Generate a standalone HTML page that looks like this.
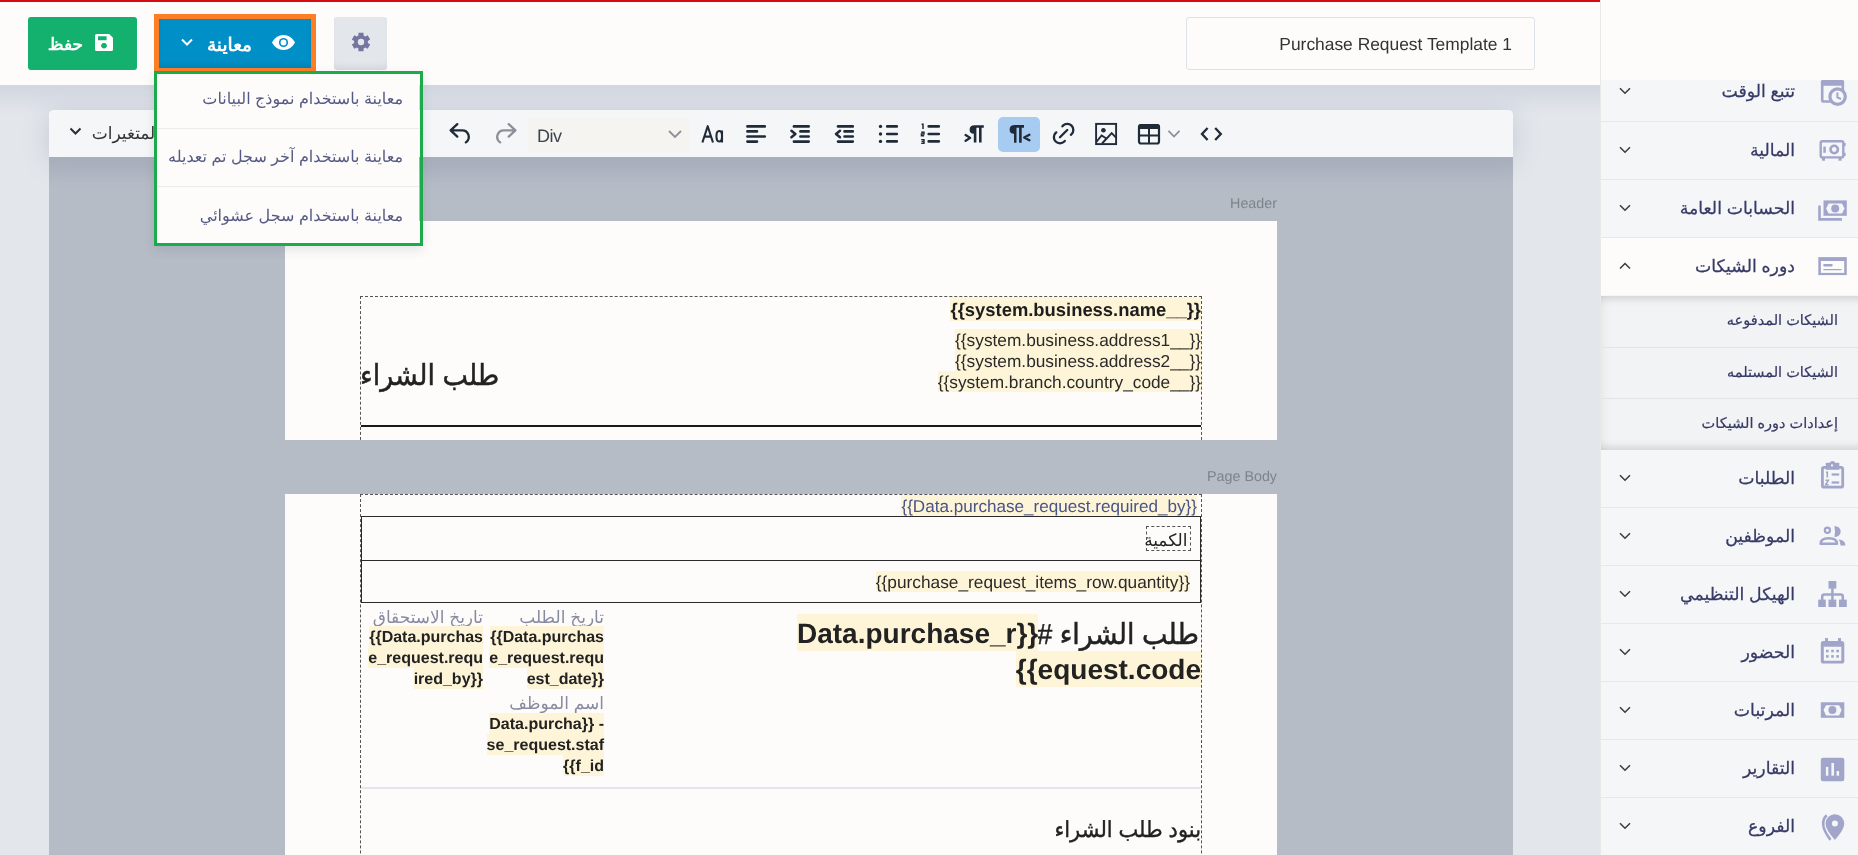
<!DOCTYPE html>
<html lang="ar">
<head>
<meta charset="utf-8">
<style>
*{box-sizing:border-box;margin:0;padding:0}
html,body{width:1858px;height:855px;overflow:hidden}
body{position:relative;background:#e3e7ec;font-family:"Liberation Sans",sans-serif;color:#222;text-rendering:geometricPrecision}
.a{position:absolute}
.nw{white-space:nowrap}
/* top bar */
#top{left:0;top:0;width:1600px;height:85px;background:#fdfcfa}
#redline{left:0;top:0;width:1600px;height:2px;background:#d40b10}
#topshadow{left:0;top:85px;width:1600px;height:30px;background:linear-gradient(#d1d6df,rgba(226,230,236,0))}
/* sidebar */
#side{left:1600px;top:0;width:258px;height:855px;background:#f5f6f8;border-left:1px solid #ebe9e6}
#sidetop{left:0;top:0;width:257px;height:80px;background:#fdfcfa}
.si{left:0;width:257px;height:58px;border-top:1px solid #e9e8e4}
.si .t{right:63px;top:0;line-height:57px;font-size:17.3px;color:#363a66;direction:rtl;-webkit-text-stroke:0.25px #363a66}
.si .ch{left:18px;top:24px;width:12px;height:8px}
.si .ic{left:217px;width:30px;height:30px}
.sub{left:0;width:257px;height:51px;border-top:1px solid #e2e3e5}
.sub .t{right:20px;top:0;line-height:50px;font-size:14.5px;color:#363a66;direction:rtl;-webkit-text-stroke:0.2px #363a66}
/* editor */
#editor{left:49px;top:110px;width:1464px;height:745px;background:#b6bcc6;border-radius:4px 4px 0 0}
#toolbar{left:0;top:0;width:1464px;height:47px;background:#f4f6f8;border-radius:4px 4px 0 0;box-shadow:0 4px 26px rgba(110,120,145,.28)}
#canvasshadow{left:0;top:47px;width:1464px;height:26px;background:linear-gradient(#a8afbc,rgba(182,188,198,0))}
.page{background:#fdfcfa}
.hl{background:#fef5d8}
.dash{border:1px dashed #555}
.lbl{font-size:14.3px;color:#7f8389}
</style>
</head>
<body><div style="position:absolute;left:0;top:0;width:1858px;height:855px;will-change:transform">
<div id="top" class="a"></div>
<div id="redline" class="a"></div>
<div id="topshadow" class="a"></div>

<!-- save button -->
<div class="a" style="left:28px;top:17px;width:109px;height:53px;background:#13b06e;border-radius:3px"></div>
<svg class="a" style="left:95px;top:34px" width="18" height="17" viewBox="0 0 18 17"><path fill="#fff" d="M1.6 0H14.2L18 3.8V15.4Q18 17 16.4 17H1.6Q0 17 0 15.4V1.6Q0 0 1.6 0ZM3 2.2V6.2H11.6V2.2ZM9 9.2A2.6 2.6 0 1 0 9.001 9.2Z"/><circle cx="9" cy="11.6" r="2.7" fill="#13b06e"/></svg>
<div class="a nw" style="left:47px;top:30px;width:36px;line-height:30px;font-size:17px;font-weight:700;color:#fff;direction:rtl;text-align:right">حفظ</div>

<!-- preview button -->
<div class="a" style="left:154px;top:14px;width:162px;height:59px;background:#fd7e24"></div>
<div class="a" style="left:159px;top:19px;width:152px;height:49px;background:#008fc6;box-shadow:inset 0 -5px 5px -2px rgba(0,40,80,.12)"></div>
<svg class="a" style="left:272px;top:35px" width="23" height="15" viewBox="0 0 23 15"><path fill="#fff" d="M11.5 0C6.5 0 2.3 3 0 7.5 2.3 12 6.5 15 11.5 15S20.7 12 23 7.5C20.7 3 16.5 0 11.5 0Z"/><circle cx="11.5" cy="7.5" r="4.6" fill="#008fc6"/><circle cx="11.5" cy="7.5" r="2.9" fill="#fff"/></svg>
<div class="a nw" style="left:200px;top:30px;width:52px;line-height:30px;font-size:18.5px;font-weight:700;color:#fff;direction:rtl;text-align:right">معاينة</div>
<svg class="a" style="left:181px;top:38px" width="12" height="9" viewBox="0 0 12 9"><path d="M1 1.5L6 6.5L11 1.5" fill="none" stroke="#fff" stroke-width="2"/></svg>

<!-- settings button -->
<div class="a" style="left:334px;top:17px;width:53px;height:53px;background:#e3e7ec;border-radius:3px;box-shadow:inset 0 -6px 6px -3px rgba(0,20,60,.07)"></div>
<svg class="a" style="left:351px;top:32.4px" width="20" height="20" viewBox="0 0 20 20"><path fill="#7476a0" d="M7.42 3.60 L7.46 0.85 L12.54 0.85 L12.58 3.60 A6.9 6.9 0 0 1 14.25 4.56 L16.66 3.22 L19.20 7.62 L16.83 9.04 A6.9 6.9 0 0 1 16.83 10.96 L19.20 12.38 L16.66 16.78 L14.25 15.44 A6.9 6.9 0 0 1 12.58 16.40 L12.54 19.15 L7.46 19.15 L7.42 16.40 A6.9 6.9 0 0 1 5.75 15.44 L3.34 16.78 L0.80 12.38 L3.17 10.96 A6.9 6.9 0 0 1 3.17 9.04 L0.80 7.62 L3.34 3.22 L5.75 4.56 A6.9 6.9 0 0 1 7.42 3.60 Z"/><circle cx="10" cy="10" r="3.2" fill="#e3e7ec"/></svg>

<!-- title input -->
<div class="a" style="left:1186px;top:17px;width:349px;height:53px;border:1px solid #dde2ea;border-radius:3px;background:#fdfcfa"></div>
<div class="a nw" style="left:1186px;top:18px;width:326px;line-height:53px;font-size:17.4px;color:#333;text-align:right">Purchase Request Template 1</div>

<!-- editor -->
<div id="editor" class="a">
  <div id="toolbar" class="a"></div>
  <div id="canvasshadow" class="a"></div>
</div>

<!-- header page -->
<div class="a nw lbl" style="right:581px;top:194px;line-height:20px">Header</div>
<div class="a page" style="left:285px;top:221px;width:992px;height:219px;overflow:hidden">
  <div class="a dash" style="left:75px;top:75px;width:842px;height:300px"></div>
  <div class="a nw" style="right:76px;top:76px;line-height:24px;font-size:18.4px;font-weight:700;color:#1e1e1e"><span class="hl" style="display:inline-block;padding-left:1px;vertical-align:top;height:24px;line-height:25.5px">{{system.business.name__}}</span></div>
  <div class="a nw" style="right:76px;top:108.4px;line-height:21px;font-size:17.3px;color:#2a2a2a;text-align:right">
    <span class="hl" style="display:inline-block;vertical-align:top;height:21px;line-height:23px">{{system.business.address1__}}</span><br>
    <span class="hl" style="display:inline-block;vertical-align:top;height:21px;line-height:23px">{{system.business.address2__}}</span><br>
    <span class="hl" style="display:inline-block;vertical-align:top;height:21px;line-height:23px">{{system.branch.country_code__}}</span>
  </div>
  <div class="a nw" style="left:75px;top:134px;line-height:40px;font-size:27px;color:#222;-webkit-text-stroke:0.45px #222;transform:scaleY(1.07);transform-origin:50% 8px">طلب الشراء</div>
  <div class="a" style="left:76px;top:204px;width:840px;height:2px;background:#1a1a1a"></div>
</div>

<!-- body page -->
<div class="a nw lbl" style="right:581px;top:467px;line-height:20px">Page Body</div>
<div class="a page" style="left:285px;top:494px;width:992px;height:361px;overflow:hidden">
  <div class="a dash" style="left:75px;top:0px;width:842px;height:500px"></div>
  <div class="a nw" style="right:80px;top:1px;line-height:21px;font-size:17.1px;color:#485488"><span class="hl" style="display:inline-block;vertical-align:top;height:21px;line-height:23px">{{Data.purchase_request.required_by}}</span></div>
  <div class="a" style="left:76px;top:22px;width:840px;height:87px;border:1px solid #2a2a2a"></div>
  <div class="a" style="left:76px;top:66px;width:840px;height:1px;background:#2a2a2a"></div>
  <div class="a" style="left:861px;top:32px;width:45px;height:25px;border:1px dashed #555"></div>
  <div class="a nw" style="right:89.5px;top:33.5px;line-height:25px;font-size:17px;color:#222;direction:rtl">الكمية</div>
  <div class="a nw" style="right:87px;top:77px;line-height:21px;font-size:17.3px;color:#2a2a2a"><span class="hl" style="display:inline-block;vertical-align:top;height:21px;line-height:23px">{{purchase_request_items_row.quantity}}</span></div>

  <div class="a nw" style="right:78px;top:122.5px;line-height:36.5px;font-size:27px;color:#222;direction:rtl;-webkit-text-stroke:0.45px #222;transform:scaleY(1.07);transform-origin:50% 70%">طلب الشراء #</div>
  <div class="a nw" style="left:512px;top:120px;width:239px;line-height:36.5px;font-size:28px;font-weight:700;color:#222;text-align:right"><span class="hl" style="display:inline-block;vertical-align:top;height:36.5px;line-height:39px">Data.purchase_r}}</span></div>
  <div class="a nw" style="right:76px;top:156.5px;line-height:36.5px;font-size:28px;font-weight:700;color:#222"><span class="hl" style="display:inline-block;vertical-align:top;height:36.5px;line-height:38.5px">{{equest.code</span></div>

  <div class="a nw" style="right:673px;top:112.5px;line-height:21px;font-size:17px;color:#888ba0;direction:rtl">تاريخ الطلب</div>
  <div class="a nw" style="right:673px;top:132px;line-height:21px;font-size:16px;font-weight:700;color:#222;text-align:right">
    <span class="hl" style="display:inline-block;vertical-align:top;height:21px;line-height:23px">{{Data.purchas</span><br><span class="hl" style="display:inline-block;vertical-align:top;height:21px;line-height:23px">e_request.requ</span><br><span class="hl" style="display:inline-block;vertical-align:top;height:21px;line-height:23px">est_date}}</span>
  </div>
  <div class="a nw" style="right:794px;top:112.5px;line-height:21px;font-size:17px;color:#888ba0;direction:rtl">تاريخ الاستحقاق</div>
  <div class="a nw" style="right:794px;top:132px;line-height:21px;font-size:16px;font-weight:700;color:#222;text-align:right">
    <span class="hl" style="display:inline-block;vertical-align:top;height:21px;line-height:23px">{{Data.purchas</span><br><span class="hl" style="display:inline-block;vertical-align:top;height:21px;line-height:23px">e_request.requ</span><br><span class="hl" style="display:inline-block;vertical-align:top;height:21px;line-height:23px">ired_by}}</span>
  </div>
  <div class="a nw" style="right:673px;top:198.5px;line-height:21px;font-size:17px;color:#888ba0;direction:rtl">اسم الموظف</div>
  <div class="a nw" style="right:673px;top:218.5px;line-height:21px;font-size:16px;font-weight:700;color:#222;text-align:right">
    <span class="hl" style="display:inline-block;vertical-align:top;height:21px;line-height:23px">Data.purcha}} -</span><br><span class="hl" style="display:inline-block;vertical-align:top;height:21px;line-height:23px">se_request.staf</span><br><span class="hl" style="display:inline-block;vertical-align:top;height:21px;line-height:23px">{{f_id</span>
  </div>
  <div class="a" style="left:76px;top:293px;width:840px;height:2px;background:#e2e6ee"></div>
  <div class="a nw" style="right:76px;top:322px;line-height:30px;font-size:21px;color:#222;direction:rtl;-webkit-text-stroke:0.35px #222;transform:scaleY(1.06);transform-origin:50% 20px">بنود طلب الشراء</div>
</div>

<!-- toolbar contents -->
<div class="a nw" style="left:80px;top:119px;width:80px;line-height:30px;font-size:17px;color:#333;direction:rtl;text-align:right">المتغيرات</div>
<svg class="a" style="left:69px;top:127px" width="13" height="9" viewBox="0 0 13 9"><path d="M1.5 1.5L6.5 6.5L11.5 1.5" fill="none" stroke="#2b2f36" stroke-width="2"/></svg>

<svg class="a" style="left:444px;top:118px" width="30" height="30" viewBox="0 0 30 30" fill="none" stroke="#1f2b38" stroke-width="2.3" stroke-linecap="round" stroke-linejoin="round"><path d="M13.3 6.1L6.6 12.3L13.3 18.6M6.6 12.3H18A6.6 6.6 0 0 1 21.8 24.4"/></svg>
<svg class="a" style="left:492px;top:118px" width="30" height="30" viewBox="0 0 30 30" fill="none" stroke="#8a9199" stroke-width="2.3" stroke-linecap="round" stroke-linejoin="round"><g transform="translate(30 0) scale(-1 1)"><path d="M13.3 6.1L6.6 12.3L13.3 18.6M6.6 12.3H18A6.6 6.6 0 0 1 21.8 24.4"/></g></svg>
<div class="a" style="left:528px;top:117px;width:162px;height:35px;background:#f5f4f1;border-radius:4px"></div>
<div class="a nw" style="left:537px;top:117.5px;line-height:36px;font-size:18px;color:#3a444f;letter-spacing:-0.5px">Div</div>
<svg class="a" style="left:667px;top:129px" width="16" height="10" viewBox="0 0 16 10"><path d="M2 2L8 8L14 2" fill="none" stroke="#8b9299" stroke-width="1.8"/></svg>

<svg class="a" style="left:698px;top:120px" width="30" height="26" viewBox="0 0 30 26" fill="none" stroke="#1f2b38" stroke-width="2.1"><path d="M4.4 22.5L9.7 6.2L15 22.5M6.4 16.6H13" stroke-linejoin="round"/><path d="M24 10.6V22.5M24 15.5C24 12.6 22.6 11.05 21.1 11.05C19.5 11.05 18.45 13 18.45 16.25C18.45 19.5 19.5 21.45 21.1 21.45C22.6 21.45 24 19.9 24 17"/></svg>
<svg class="a" style="left:744px;top:123px" width="24" height="22" fill="none" stroke="#1f2b38" stroke-width="2.6" stroke-linecap="round"><path d="M3.4 3.4H20.8M3.4 8.4H13M3.4 13.5H20.8M3.4 18.6H13"/></svg>
<svg class="a" style="left:788px;top:123px" width="24" height="22" fill="none" stroke="#1f2b38" stroke-width="2.6" stroke-linecap="round" stroke-linejoin="round"><path d="M5.9 3.4H20.7M12.4 8.4H20.7M12.4 13.5H20.7M5.9 18.6H20.7"/><path d="M3.4 7.8L7.4 11L3.4 14.2" stroke-width="2.5"/></svg>
<svg class="a" style="left:832px;top:123px" width="24" height="22" fill="none" stroke="#1f2b38" stroke-width="2.6" stroke-linecap="round" stroke-linejoin="round"><path d="M6 3.4H20.8M12.5 8.4H20.8M12.5 13.5H20.8M6 18.6H20.8"/><path d="M8 7.8L4 11L8 14.2" stroke-width="2.5"/></svg>
<svg class="a" style="left:876px;top:123px" width="24" height="22" fill="none" stroke="#1f2b38" stroke-width="2.6" stroke-linecap="round"><path d="M11.2 3.4H20.8M11.2 11H20.8M11.2 18.4H20.8"/><circle cx="4.5" cy="3.4" r="1.7" fill="#1f2b38" stroke="none"/><circle cx="4.5" cy="11" r="1.7" fill="#1f2b38" stroke="none"/><circle cx="4.5" cy="18.4" r="1.7" fill="#1f2b38" stroke="none"/></svg>
<svg class="a" style="left:918px;top:123px" width="24" height="22" fill="none" stroke="#1f2b38" stroke-width="2.6" stroke-linecap="round"><path d="M10.7 3.4H20.8M10.7 11H20.8M10.7 18.4H20.8"/><path d="M3.6 1.3H5V6" stroke-width="1.5" stroke-linecap="butt"/><path d="M3.2 9.2H6V11H3.4V12.8H6.1" stroke-width="1.4" stroke-linecap="butt"/><path d="M3.2 16.6H6V20.4H3.2M3.6 18.5H6" stroke-width="1.4" stroke-linecap="butt"/></svg>

<svg class="a" style="left:962px;top:122px" width="26" height="24"><path fill="#1f2b38" d="M13 3.2H21.8V5.8H19.6V20.6H17V5.8H14.4V20.6H11.8V11.8Q7.6 11.8 7.6 7.5Q7.6 3.2 13 3.2Z"/><path d="M3.6 13L8.2 15.9L3.6 18.8" fill="none" stroke="#1f2b38" stroke-width="2.3" stroke-linecap="round" stroke-linejoin="round"/></svg>
<div class="a" style="left:998px;top:117px;width:42px;height:35px;background:#a8cbf2;border-radius:5px"></div>
<svg class="a" style="left:1004px;top:122px" width="30" height="24"><path fill="#1f2b38" d="M11 3.1H20V5.7H17.7V20.7H15.1V5.7H12.5V20.7H10V11.7Q5.6 11.7 5.6 7.4Q5.6 3.1 11 3.1Z"/><path d="M25.4 12.7L20.2 15.5L25.4 18.3" fill="none" stroke="#1f2b38" stroke-width="2.4" stroke-linecap="round" stroke-linejoin="round"/></svg>
<svg class="a" style="left:1048.7px;top:119.1px" width="29.2" height="29.2" viewBox="0 0 24 24" fill="none" stroke="#1f2b38" stroke-width="1.9" stroke-linecap="round" stroke-linejoin="round"><path d="M9 15l6-6"/><path d="M11 6l.463-.536a5 5 0 0 1 7.071 7.072l-.534.464"/><path d="M13 18l-.397.534a5.068 5.068 0 0 1-7.127 0a4.972 4.972 0 0 1 0-7.071l.524-.463"/></svg>
<svg class="a" style="left:1094px;top:122px" width="24" height="24" fill="none" stroke="#1f2b38" stroke-width="1.9"><rect x="2.1" y="1.9" width="20" height="20.2"/><circle cx="9.4" cy="8.2" r="2.3" fill="#1f2b38" stroke="none"/><path d="M2.3 20L7.6 13.5L12 16.2M8 21.5L17.7 11.2L22 15.6"/></svg>
<svg class="a" style="left:1137px;top:123px" width="24" height="22"><rect x="2" y="2" width="20" height="18.5" rx="2" fill="none" stroke="#1f2b38" stroke-width="2.2"/><rect x="1.5" y="1.2" width="21" height="4.7" rx="1.5" fill="#1f2b38"/><path d="M2 12.6H22M12 5V20" stroke="#1f2b38" stroke-width="2"/></svg>
<svg class="a" style="left:1166px;top:128px" width="16" height="12" fill="none" stroke="#8a9199" stroke-width="1.8"><path d="M2.5 2.8L8 8.5L13.5 2.8"/></svg>
<svg class="a" style="left:1199px;top:125px" width="25" height="18" fill="none" stroke="#1f2b38" stroke-width="2.3" stroke-linejoin="miter"><path d="M8.6 3L3 9L8.6 15M16.2 3L21.8 9L16.2 15"/></svg>

<!-- dropdown -->
<div class="a" style="left:154px;top:71px;width:269px;height:175px;border:3px solid #1bab4b;box-shadow:0 4px 10px rgba(60,70,90,.13)"></div>
<div class="a" style="left:157px;top:74px;width:262px;height:169px;background:#fdfcfa"></div>
<div class="a" style="left:157px;top:128px;width:262px;height:1px;background:#ebebeb"></div>
<div class="a" style="left:157px;top:186px;width:262px;height:1px;background:#ebebeb"></div>
<div class="a nw" style="right:1455px;top:85px;line-height:30px;font-size:16px;color:#555a84;direction:rtl">معاينة باستخدام نموذج البيانات</div>
<div class="a nw" style="right:1455px;top:143px;line-height:30px;font-size:16px;color:#555a84;direction:rtl">معاينة باستخدام آخر سجل تم تعديله</div>
<div class="a nw" style="right:1455px;top:202px;line-height:30px;font-size:16px;color:#555a84;direction:rtl">معاينة باستخدام سجل عشوائي</div>

<!-- sidebar -->
<div id="side" class="a">
  <div class="si a" style="top:63px;border-top:none"><div class="a nw t">تتبع الوقت</div><svg class="a ch" viewBox="0 0 12 8"><path d="M1 1.2L6 6.2L11 1.2" fill="none" stroke="#3d3d3d" stroke-width="1.55"/></svg>
  </div>
  <div id="sidetop" class="a"></div>
  <div class="si a" style="top:121px"><div class="a nw t">المالية</div><svg class="a ch" viewBox="0 0 12 8"><path d="M1 1.2L6 6.2L11 1.2" fill="none" stroke="#3d3d3d" stroke-width="1.55"/></svg>
  </div>
  <div class="si a" style="top:179px"><div class="a nw t">الحسابات العامة</div><svg class="a ch" viewBox="0 0 12 8"><path d="M1 1.2L6 6.2L11 1.2" fill="none" stroke="#3d3d3d" stroke-width="1.55"/></svg>
  </div>
  <div class="si a" style="top:237px;background:#fdfcfa"><div class="a nw t">دوره الشيكات</div><svg class="a ch" viewBox="0 0 12 8"><path d="M1 6.5L6 1.5L11 6.5" fill="none" stroke="#3d3d3d" stroke-width="1.55"/></svg>
  </div>
  <div class="a" style="left:0;top:296px;width:257px;height:154px;background:#f2f3f5;box-shadow:inset 0 10px 10px -8px rgba(0,0,0,.16),inset 0 -10px 10px -8px rgba(0,0,0,.16),inset 10px 0 10px -8px rgba(0,0,0,.06)"></div>
  <div class="sub a" style="top:296px;border-top:none"><div class="a nw t">الشيكات المدفوعه</div></div>
  <div class="sub a" style="top:347px"><div class="a nw t">الشيكات المستلمه</div></div>
  <div class="sub a" style="top:398px"><div class="a nw t">إعدادات دوره الشيكات</div></div>
  <div class="si a" style="top:450px;border-top:none;height:57px"><div class="a nw t">الطلبات</div><svg class="a ch" viewBox="0 0 12 8"><path d="M1 1.2L6 6.2L11 1.2" fill="none" stroke="#3d3d3d" stroke-width="1.55"/></svg>
  </div>
  <div class="si a" style="top:507px"><div class="a nw t">الموظفين</div><svg class="a ch" viewBox="0 0 12 8"><path d="M1 1.2L6 6.2L11 1.2" fill="none" stroke="#3d3d3d" stroke-width="1.55"/></svg>
  </div>
  <div class="si a" style="top:565px"><div class="a nw t">الهيكل التنظيمي</div><svg class="a ch" viewBox="0 0 12 8"><path d="M1 1.2L6 6.2L11 1.2" fill="none" stroke="#3d3d3d" stroke-width="1.55"/></svg>
  </div>
  <div class="si a" style="top:623px"><div class="a nw t">الحضور</div><svg class="a ch" viewBox="0 0 12 8"><path d="M1 1.2L6 6.2L11 1.2" fill="none" stroke="#3d3d3d" stroke-width="1.55"/></svg>
  </div>
  <div class="si a" style="top:681px"><div class="a nw t">المرتبات</div><svg class="a ch" viewBox="0 0 12 8"><path d="M1 1.2L6 6.2L11 1.2" fill="none" stroke="#3d3d3d" stroke-width="1.55"/></svg>
  </div>
  <div class="si a" style="top:739px"><div class="a nw t">التقارير</div><svg class="a ch" viewBox="0 0 12 8"><path d="M1 1.2L6 6.2L11 1.2" fill="none" stroke="#3d3d3d" stroke-width="1.55"/></svg>
  </div>
  <div class="si a" style="top:797px"><div class="a nw t">الفروع</div><svg class="a ch" viewBox="0 0 12 8"><path d="M1 1.2L6 6.2L11 1.2" fill="none" stroke="#3d3d3d" stroke-width="1.55"/></svg>
  </div>
</div>

<!-- sidebar icons overlay -->
<svg class="a" style="left:1810px;top:0" width="48" height="855" viewBox="0 0 48 855">
 <g fill="#a2a5ca">
  <rect x="12.2" y="81.2" width="20.6" height="20.3" rx="1.6" fill="none" stroke="#a2a5ca" stroke-width="2.6"/>
  <rect x="10.9" y="79.9" width="23.2" height="5.8" rx="1.6"/>
  <circle cx="27.6" cy="96.6" r="7.7" fill="#f5f6f8" stroke="#a2a5ca" stroke-width="3.2"/>
  <path d="M27.4 92.4V97.4L31 99" fill="none" stroke="#a2a5ca" stroke-width="2"/>

  <rect x="10.7" y="141.2" width="22.6" height="16.2" rx="1.6" fill="none" stroke="#a2a5ca" stroke-width="2.4"/>
  <rect x="13.3" y="146.5" width="2.5" height="6.3"/>
  <circle cx="24.2" cy="149.5" r="3.7" fill="none" stroke="#a2a5ca" stroke-width="2.6"/>
  <rect x="33.5" y="143" width="2.1" height="3.2"/><rect x="33.5" y="152.8" width="2.1" height="3.2"/>
  <rect x="12" y="157.5" width="3" height="3.2"/><rect x="28.5" y="157.5" width="3" height="3.2"/>

  <rect x="13.5" y="200.4" width="23.3" height="15.4"/>
  <path d="M16.1 208.4L18.6 203.4H32L34.5 208.4L32 213.4H18.6Z" fill="#f5f6f8"/>
  <circle cx="25.2" cy="208.4" r="4"/>
  <path d="M9.5 205.6V219.4H31.9" fill="none" stroke="#a2a5ca" stroke-width="2.6"/>

  <rect x="8.3" y="257.1" width="28.5" height="18" />
  <rect x="10.9" y="261" width="23.3" height="11.9" fill="#fdfcfa"/>
  <rect x="13.2" y="264" width="9.5" height="2.4" rx="1.1"/>
  <rect x="13.2" y="269" width="18.5" height="1.2" rx="0.6"/>

  <rect x="12.4" y="467.4" width="20.3" height="19.8" rx="1.8" fill="none" stroke="#a2a5ca" stroke-width="2.8"/>
  <path d="M15.8 462.8H29.3V469.8H15.8Z"/>
  <circle cx="22.5" cy="463.6" r="2.6"/>
  <circle cx="22" cy="465.4" r="1.1" fill="#f5f6f8"/>
  <path d="M16 472.2H17.3V477.4" fill="none" stroke="#a2a5ca" stroke-width="1.6"/>
  <path d="M15.6 480.2H18.4L15.6 484.8H18.6" fill="none" stroke="#a2a5ca" stroke-width="1.5"/>
  <rect x="21.6" y="473.4" width="7.6" height="2.2"/>
  <rect x="21.6" y="481.4" width="7.6" height="2.2"/>

  <circle cx="17.4" cy="530.3" r="2.6" fill="none" stroke="#a2a5ca" stroke-width="2.2"/>
  <path d="M10.6 543.7Q10.6 538.2 18.8 538.2Q27 538.2 27 543.7Z" fill="none" stroke="#a2a5ca" stroke-width="2.4" stroke-linejoin="round"/>
  <path d="M24.4 526A6.3 5.5 0 0 1 24.4 537Q25.6 531.5 24.4 526Z"/>
  <path d="M28.6 539.6Q35.4 540.2 35.4 545.4H30.6Q30.4 542 28.6 539.6Z"/>

  <rect x="18.5" y="581" width="7.8" height="7.6"/>
  <rect x="8.2" y="599.6" width="7.6" height="7.4"/><rect x="18.5" y="599.6" width="7.8" height="7.4"/><rect x="29" y="599.6" width="7.8" height="7.4"/>
  <path d="M22.4 588V600M12.2 600V596.6Q12.2 594.5 14.4 594.5H30.6Q32.8 594.5 32.8 596.6V600" fill="none" stroke="#a2a5ca" stroke-width="2.5"/>

  <path d="M12.4 641H31.7Q34.3 641 34.3 643.6V661Q34.3 663.6 31.7 663.6H13.4Q10.8 663.6 10.8 661V643.6Q10.8 641 13.4 641ZM13.8 646.8V660.7H31.3V646.8Z" fill-rule="evenodd"/>
  <rect x="15" y="638.1" width="3" height="4"/><rect x="28" y="638.1" width="3" height="4"/>
  <rect x="16" y="649.7" width="2.6" height="2.6"/><rect x="21.2" y="649.7" width="2.6" height="2.6"/><rect x="26.3" y="649.7" width="2.6" height="2.6"/>
  <rect x="16" y="655.1" width="2.6" height="2.6"/><rect x="21.2" y="655.1" width="2.6" height="2.6"/><rect x="26.3" y="655.1" width="2.6" height="2.6"/>

  <rect x="10.8" y="702.3" width="23.5" height="15.5"/>
  <path d="M13.5 710.1L16 705.2H29.1L31.6 710.1L29.1 715.4H16Z" fill="#f5f6f8"/>
  <circle cx="22.4" cy="710.1" r="4"/>

  <rect x="10.8" y="757.7" width="23.5" height="23.5" rx="2.2"/>
  <rect x="15.9" y="766.9" width="2.4" height="8.8" fill="#f5f6f8"/>
  <rect x="21.4" y="763" width="2.6" height="12.7" fill="#f5f6f8"/>
  <rect x="26.6" y="771" width="2.5" height="4.7" fill="#f5f6f8"/>

  <path d="M24.9 814.2A9.4 9.4 0 0 1 34.3 823.6Q34.3 829.6 24.9 840Q15.5 829.6 15.5 823.6A9.4 9.4 0 0 1 24.9 814.2Z"/>
  <circle cx="24.9" cy="823.4" r="3" fill="#f5f6f8"/>
  <path d="M16.7 815.3Q8 823.6 20.5 839.9" fill="none" stroke="#a2a5ca" stroke-width="2.6"/>
 </g>
</svg>

</div></body>
</html>
